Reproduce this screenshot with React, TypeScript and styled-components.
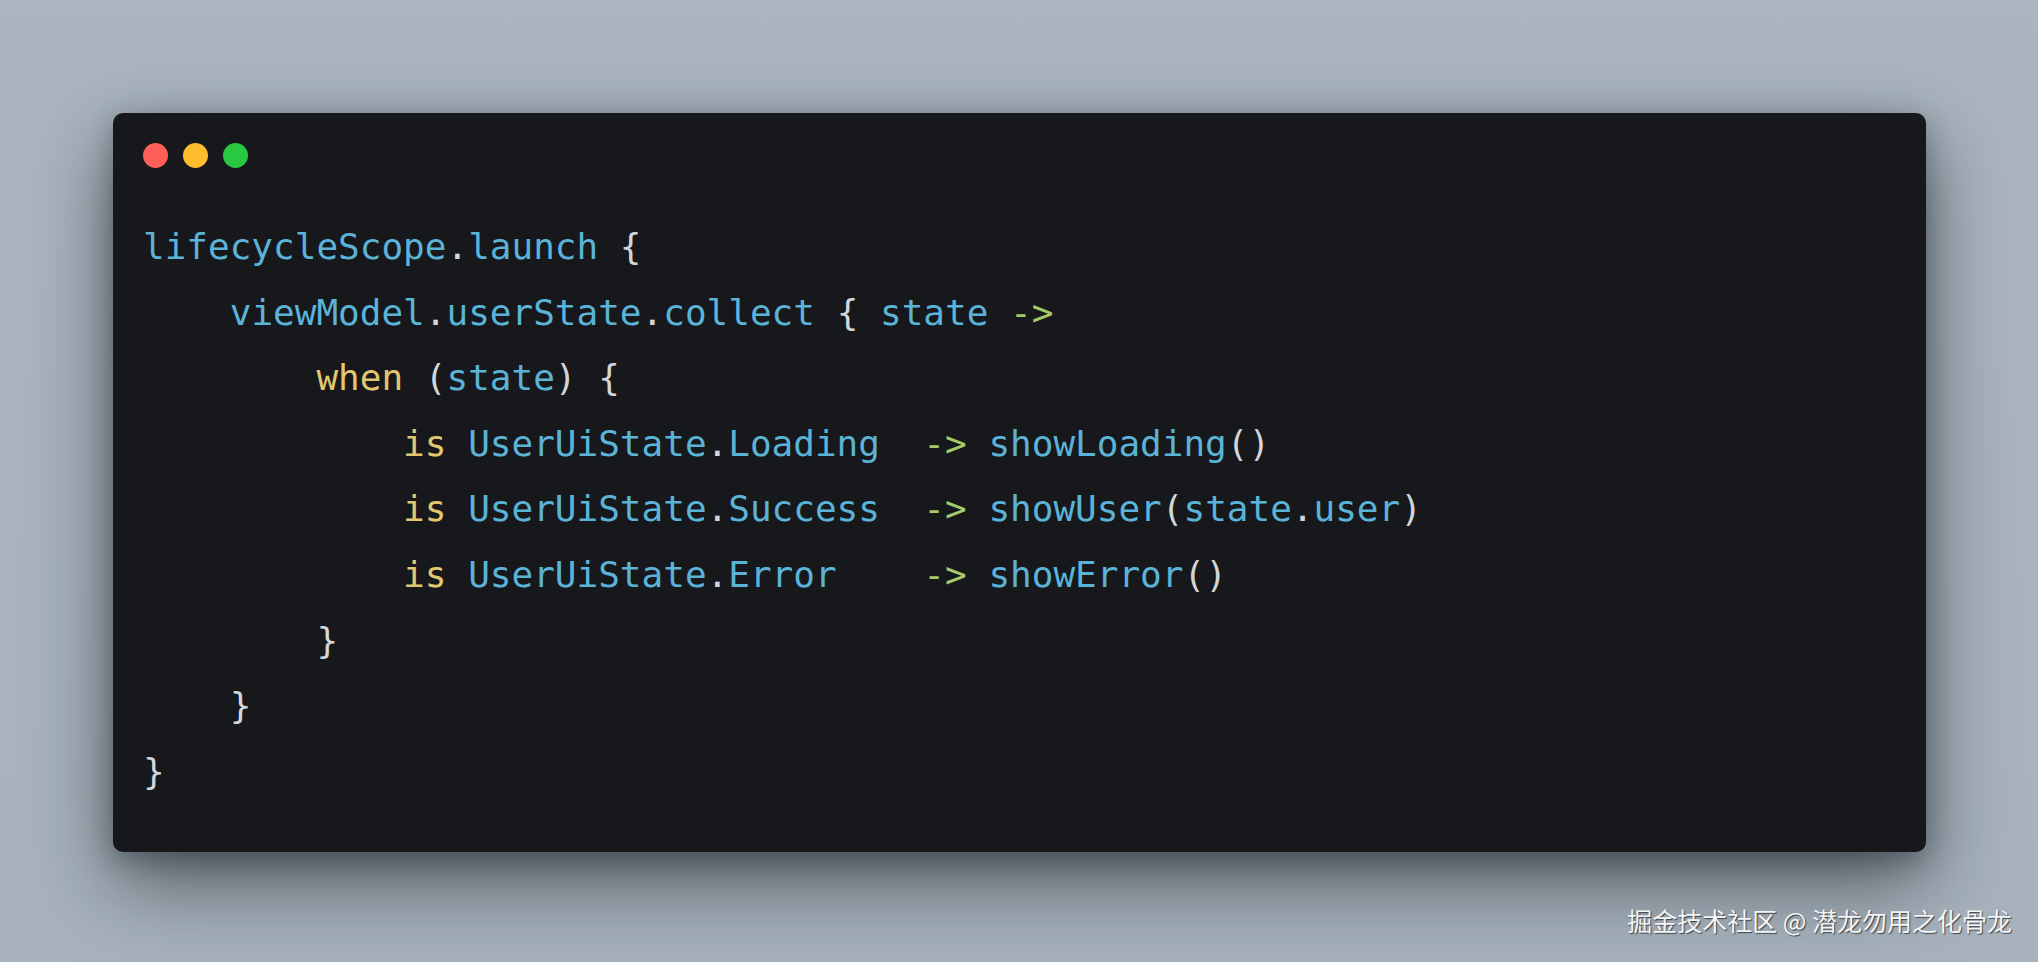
import React from "react";
import styled, { createGlobalStyle } from "styled-components";

const GlobalStyle = createGlobalStyle`
  html, body { margin: 0; padding: 0; }
  body { background: #a8b3bd; }
`;

const Page = styled.div`
  position: relative;
  box-sizing: border-box;
  width: 2038px;
  height: 962px;
  padding: 113px 112px 0 113px;
  background: linear-gradient(180deg, #aab5bf 0%, #a7b2bc 100%);
  overflow: hidden;
`;

const Window = styled.div`
  box-sizing: border-box;
  display: flex;
  flex-direction: column;
  background: #16181b;
  border-radius: 10px;
  padding: 30px 30px 48px 30px;
  box-shadow: 0 30px 80px rgba(20, 26, 32, 0.6), 0 8px 26px rgba(20, 26, 32, 0.3);
`;

const Dots = styled.div`
  display: flex;
  gap: 15px;
  margin-bottom: 46px;
`;

const Dot = styled.span<{ $color: string }>`
  width: 25px;
  height: 25px;
  border-radius: 50%;
  background: ${(p) => p.$color};
`;

const Code = styled.pre`
  margin: 0;
  font-family: "DejaVu Sans Mono", "Liberation Mono", monospace;
  font-size: 36px;
  line-height: 65.6px;
  color: #d3d6d9;
  white-space: pre;
`;

const Line = styled.div`
  height: 65.6px;
`;

const Tok = styled.span<{ $k: "id" | "kw" | "op" | "p" }>`
  color: ${(p) =>
    p.$k === "id"
      ? "#5bb3d8"
      : p.$k === "kw"
      ? "#e3c76f"
      : p.$k === "op"
      ? "#a6c96a"
      : "#d3d6d9"};
`;

const Watermark = styled.div`
  position: absolute;
  right: 26px;
  bottom: 27px;
  font-family: "Noto Sans CJK SC", "Noto Sans", sans-serif;
  font-size: 25px;
  line-height: 30px;
  color: #f4f5f6;
  text-shadow: 1px 1px 1px rgba(30, 35, 40, 0.75);
`;

type T = [string, "id" | "kw" | "op" | "p"];

const lines: T[][] = [
  [["lifecycleScope", "id"], [".", "p"], ["launch", "id"], [" {", "p"]],
  [["    ", "p"], ["viewModel", "id"], [".", "p"], ["userState", "id"], [".", "p"], ["collect", "id"], [" { ", "p"], ["state", "id"], [" ", "p"], ["->", "op"]],
  [["        ", "p"], ["when", "kw"], [" (", "p"], ["state", "id"], [") {", "p"]],
  [["            ", "p"], ["is", "kw"], [" ", "p"], ["UserUiState", "id"], [".", "p"], ["Loading", "id"], ["  ", "p"], ["->", "op"], [" ", "p"], ["showLoading", "id"], ["()", "p"]],
  [["            ", "p"], ["is", "kw"], [" ", "p"], ["UserUiState", "id"], [".", "p"], ["Success", "id"], ["  ", "p"], ["->", "op"], [" ", "p"], ["showUser", "id"], ["(", "p"], ["state", "id"], [".", "p"], ["user", "id"], [")", "p"]],
  [["            ", "p"], ["is", "kw"], [" ", "p"], ["UserUiState", "id"], [".", "p"], ["Error", "id"], ["    ", "p"], ["->", "op"], [" ", "p"], ["showError", "id"], ["()", "p"]],
  [["        }", "p"]],
  [["    }", "p"]],
  [["}", "p"]],
];

export default function App() {
  return (
    <>
      <GlobalStyle />
      <Page>
        <Window>
          <Dots>
            <Dot $color="#fe5f57" />
            <Dot $color="#febc2e" />
            <Dot $color="#28c840" />
          </Dots>
          <Code>
            {lines.map((ln, i) => (
              <Line key={i}>
                {ln.map(([t, k], j) => (
                  <Tok key={j} $k={k}>
                    {t}
                  </Tok>
                ))}
              </Line>
            ))}
          </Code>
        </Window>
        <Watermark>掘金技术社区 @ 潜龙勿用之化骨龙</Watermark>
      </Page>
    </>
  );
}
